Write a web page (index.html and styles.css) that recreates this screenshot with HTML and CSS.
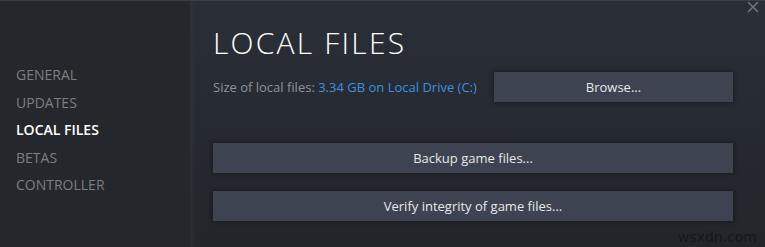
FILE: index.html
```html
<!DOCTYPE html>
<html>
  <head>
    <link rel="stylesheet" href="styles.css">
    <title>Properties - Local Files</title>
  </head>
  <body>
    <div class="window">
      <div class="sidebar">
        <p class="tab">GENERAL</p>
        <p class="tab">UPDATES</p>
        <p class="tab active">LOCAL FILES</p>
        <p class="tab">BETAS</p>
        <p class="tab">CONTROLLER</p>
      </div>

      <div class="main">
        <p class="title">LOCAL FILES</p>

        <div class="sizeRow">
          <p class="size">Size of local files: <span class="drive">3.34 GB on Local Drive (C:)</span></p>
          <button class="btn browse">Browse...</button>
        </div>

        <button class="btn wide backup">Backup game files...</button>
        <button class="btn wide verify">Verify integrity of game files...</button>

        <p class="mark">wsxdn.com</p>
      </div>

      <svg class="close" width="12" height="12" viewBox="0 0 12 12">
        <path d="M1 1 L11 11 M11 1 L1 11" stroke="#70747b" stroke-width="1.6"/>
      </svg>
    </div>
  </body>
</html>
```

FILE: styles.css
```css
body{
  margin: 0;
  background-color: #24272c;
  font-family: "Open Sans", "Liberation Sans", sans-serif;
}

.window{
  position: relative;
  display: flex;
  width: 765px;
  height: 247px;
  border-top: 1px solid #3a3e45;
  box-sizing: border-box;
}

.sidebar{
  width: 190px;
  padding-top: 60px;
  padding-left: 16px;
  box-sizing: border-box;
  background-color: #24272c;
}

.tab{
  margin: 0;
  height: 27.5px;
  line-height: 27.5px;
  font-size: 14px;
  color: #7b7f85;
}

.active{
  color: #ffffff;
  font-weight: 600;
}

.main{
  position: relative;
  flex: 1;
  padding-left: 23px;
  padding-right: 32px;
  background: linear-gradient(to bottom, #2a2e37 0%, #262a31 50%, #22252a 100%);
  box-shadow: inset 6px 0 6px -4px #30343c;
}

.title{
  margin: 0;
  margin-top: 22px;
  font-size: 30px;
  font-weight: 300;
  letter-spacing: 2.2px;
  line-height: 40px;
  color: #ffffff;
}

.sizeRow{
  display: flex;
  align-items: center;
  justify-content: space-between;
  margin-top: 9px;
}

.size{
  margin: 0;
  font-size: 13px;
  color: #8e949c;
}

.drive{
  color: #3f8fe0;
}

.btn{
  display: block;
  border: none;
  background-color: #3d4350;
  color: #e6e8ea;
  font-family: "Open Sans", "Liberation Sans", sans-serif;
  font-size: 13px;
  height: 30px;
  box-shadow: 0 0 4px 1px rgba(0, 0, 0, 0.35);
  cursor: pointer;
}

.browse{
  width: 239px;
}

.wide{
  width: 100%;
}

.backup{
  margin-top: 41px;
}

.verify{
  margin-top: 18px;
}

.mark{
  position: absolute;
  right: 8px;
  bottom: 2px;
  margin: 0;
  font-family: "DejaVu Sans", sans-serif;
  font-size: 14px;
  color: #15171a;
}

.close{
  position: absolute;
  top: 0;
  right: 6px;
}
```
